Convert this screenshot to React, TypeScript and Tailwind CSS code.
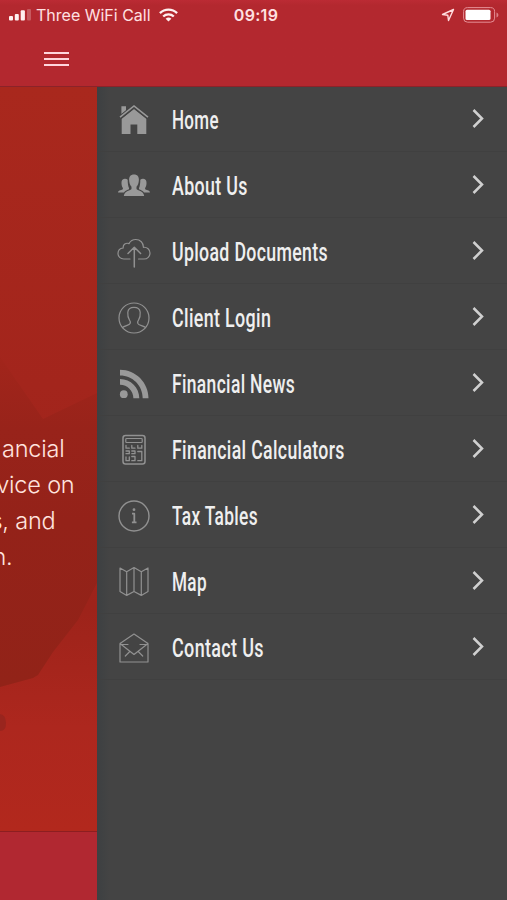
import React, { useLayoutEffect, useRef, useState } from 'react';

type IconProps = { children: React.ReactNode };

function LineIcon({ children }: IconProps) {
  return (
    <svg width="34" height="34" viewBox="0 0 34 34" fill="none" stroke="#919191" strokeWidth="1.2" strokeLinejoin="round" strokeLinecap="round">
      {children}
    </svg>
  );
}

function SolidIcon({ children }: IconProps) {
  return (
    <svg width="34" height="34" viewBox="0 0 34 34" fill="#999999">
      {children}
    </svg>
  );
}

const HomeIcon = () => (
  <SolidIcon>
    <path d="M4.4 3.3h4.600v4L4.400 11zM17 6.1l12.300 9.600V31h-9v-9.500h-6.800V31H4.700V15.700z" />
    <path d="M3 14.700 17 3.400l14 11.300" fill="none" stroke="#444444" strokeWidth="3.600" />
    <path d="M3 14.200 17 3l14 11.200" fill="none" stroke="#999999" strokeWidth="1.600" />
  </SolidIcon>
);

const PeopleIcon = () => (
  <SolidIcon>
    <path d="M17 5.500c-3.400 0-5 2.200-4.900 5.300.1 3.100 1 5.600 2.400 6.900v2.300c-.7 1.700-7 1.600-7.700 7h20.400c-.7-5.400-7-5.300-7.700-7v-2.300c1.400-1.300 2.300-3.800 2.400-6.900.1-3.100-1.500-5.300-4.900-5.300z" />
    <path d="M10.700 10.800c-.8-.9-1.800-1.200-3-1.100-2.600.2-3.400 2.200-3.200 4.700.1 2 .7 3.700 1.400 4.500v1.200c-.8 1.500-4.500.9-4.900 3.300h6c1.200-1.700 3.400-2.300 5-3.100v-1.300c-.9-1.700-1.300-4.500-1.300-8.200z" />
    <path d="M23.300 10.800c.8-.9 1.800-1.200 3-1.100 2.600.2 3.400 2.200 3.200 4.700-.1 2-.7 3.700-1.400 4.500v1.200c.8 1.500 4.500.9 4.900 3.300h-6c-1.200-1.700-3.400-2.300-5-3.100v-1.300c.9-1.700 1.300-4.500 1.300-8.200z" />
  </SolidIcon>
);

const UploadIcon = () => (
  <LineIcon>
    <path d="M13 24H6.800C3.400 24 1 21.600 1 18.500s2.200-5.200 5.200-5.500C5.700 9.600 9 7.400 12 8.600 13.500 5.700 16 4.500 18.800 4.500c4.500 0 7.700 3.400 7.600 7.800 3.800-.4 6.600 2.300 6.600 5.800 0 3.400-2.700 5.900-6 5.900h-5.500" />
    <path d="M17.300 32V13M11 18.500l6.300-6.300 6.300 6.300" strokeWidth="1.500" />
  </LineIcon>
);

const UserIcon = () => (
  <LineIcon>
    <circle cx="17" cy="17" r="15" />
    <path d="M5.500 26.500c2-1.800 6.900-2.200 7.600-3.900.4-1 .1-2.600-.7-3.700-1.600-2.300-1.800-4.900-1.600-7.600.3-3.300 2.300-5 6.200-5s5.900 1.700 6.200 5c.2 2.700 0 5.300-1.600 7.600-.8 1.100-1.100 2.700-.7 3.700.7 1.700 5.600 2.100 7.600 3.900" />
  </LineIcon>
);

const RssIcon = () => (
  <SolidIcon>
    <circle cx="6.800" cy="27.200" r="3.900" />
    <path d="M3 11.900c10.800 0 19.300 8.600 19.300 19.300h-5.900c0-7.400-6-13.400-13.400-13.400z" />
    <path d="M3 2.700c15.700 0 28.500 12.800 28.500 28.500h-5.800C25.700 18.600 15.600 8.500 3 8.500z" />
  </SolidIcon>
);

const CalculatorIcon = () => (
  <LineIcon>
    <rect x="6" y="2.500" width="22" height="28.500" rx="2.500" strokeWidth="1.500" />
    <rect x="8.800" y="5.500" width="16.400" height="4" rx=".8" />
    <path d="M9 12.500v2.700h3.300M14.800 12.500v2.700H18M20.800 12.500v2.700h4v-2.700M9 20.700h3.300V18H9M14.800 20.700H18V18h-3.200M9 24v3.700h3.300V24M14.800 27.700H18V23.500h-3.200M20.800 18.500h4v9.200h-4" strokeWidth="1.300" />
  </LineIcon>
);

const InfoIcon = () => (
  <LineIcon>
    <circle cx="17" cy="17" r="15" strokeWidth="1.400" />
    <circle cx="17" cy="10.700" r="1.400" fill="#919191" stroke="none" />
    <path d="M15 14.700h2.300V23M14.900 23.400h4.600" strokeWidth="1.800" strokeLinecap="butt" />
  </LineIcon>
);

const MapIcon = () => (
  <LineIcon>
    <path d="M3 3l6.700 3.800L17 2.600l7.300 4.200L31 3v23.500l-6.700 3.900L17 26.500l-7.300 3.900L3 26.500zM9.700 6.800v23.600M17 2.600v23.900M24.300 6.800v23.600" />
  </LineIcon>
);

const MailIcon = () => (
  <LineIcon>
    <path d="M3 12.500V31h28V12.500M3 12.500 17 3l14 9.500M3 12.500l14 11 14-11M3 13.500h8M31 13.500h-8M8.300 25l4.500-4.500M25.700 25l-4.500-4.500" />
  </LineIcon>
);

const menuItems = [
  { label: 'Home', width: 47, icon: <HomeIcon /> },
  { label: 'About Us', width: 76, icon: <PeopleIcon /> },
  { label: 'Upload Documents', width: 156, icon: <UploadIcon /> },
  { label: 'Client Login', width: 99, icon: <UserIcon /> },
  { label: 'Financial News', width: 123, icon: <RssIcon /> },
  { label: 'Financial Calculators', width: 173, icon: <CalculatorIcon /> },
  { label: 'Tax Tables', width: 86, icon: <InfoIcon /> },
  { label: 'Map', width: 35, icon: <MapIcon /> },
  { label: 'Contact Us', width: 92, icon: <MailIcon /> },
];

// Squeezes a label horizontally so it reads as a condensed face
function CondensedLabel({ text, width }: { text: string; width: number }) {
  const ref = useRef<HTMLSpanElement>(null);
  const [scale, setScale] = useState(0.6);

  useLayoutEffect(() => {
    if (ref.current) {
      setScale(width / ref.current.offsetWidth);
    }
  }, [text, width]);

  return (
    <span
      ref={ref}
      className="origin-left whitespace-nowrap font-['Roboto',sans-serif] text-[26px] leading-8 font-medium tracking-[0.5px] text-[#efefef]"
      style={{ transform: `scaleX(${scale})` }}
    >
      {text}
    </span>
  );
}

function StatusBar() {
  return (
    <div className="flex h-[30px] items-center pr-2 pl-[9px] font-['Inter',sans-serif] text-[#ffe0e2]">
      <div className="flex flex-1 items-center whitespace-nowrap">
        <svg className="shrink-0" width="23" height="12" viewBox="0 0 23 12" fill="#fff0f0">
          <rect x="0" y="7" width="4" height="4.500" rx="1" />
          <rect x="5.800" y="5" width="4" height="6.500" rx="1" />
          <rect x="11.700" y="1.200" width="4.200" height="10.300" rx="1" />
          <rect x="18" y="0" width="4" height="11.500" rx="1" opacity=".25" />
        </svg>
        <span className="ml-1 text-[16px]">Three WiFi Call</span>
        <svg className="ml-2 shrink-0" width="19" height="14" viewBox="0 0 19 14" fill="none" stroke="#fff0f0" strokeWidth="2.300">
          <path d="M.9 5.100a12.400 12.400 0 0 1 17.200 0M4.200 8.500a7.600 7.600 0 0 1 10.600 0" />
          <path d="M9.500 13.500 6.600 10.700a4.300 4.300 0 0 1 5.800 0z" fill="#fff0f0" stroke="none" />
        </svg>
      </div>
      <div className="pl-1 text-[16px] font-semibold tracking-[0.3px]">09:19</div>
      <div className="flex flex-1 items-center justify-end gap-2">
        <svg width="14" height="14" viewBox="0 0 14 14" fill="none" stroke="#ffdcde" strokeWidth="1.400" strokeLinejoin="round">
          <path d="M12.500 1.500 1.500 6.500l5.300.7.700 5.300z" />
        </svg>
        <svg width="36" height="16" viewBox="0 0 36 16">
          <rect x=".6" y=".6" width="31" height="14.600" rx="4" fill="none" stroke="#e58f96" strokeWidth="1" />
          <rect x="2.500" y="2.700" width="25" height="10.400" rx="1.500" fill="#fff" />
          <path d="M33.500 5.500c2.500 1 2.500 4 0 5z" fill="#dc8087" />
        </svg>
      </div>
    </div>
  );
}

function Backdrop() {
  return (
    <svg className="absolute inset-0" width="97" height="744" viewBox="0 0 97 744" preserveAspectRatio="none">
      <defs>
        <linearGradient id="base" x1="0" y1="0" x2="0" y2="1">
          <stop offset="0" stopColor="#a9281d" />
          <stop offset=".4" stopColor="#a3251c" />
          <stop offset=".7" stopColor="#9d231a" />
          <stop offset=".86" stopColor="#ad271e" />
          <stop offset="1" stopColor="#b2281d" />
        </linearGradient>
        <linearGradient id="shade" gradientUnits="userSpaceOnUse" x1="0" y1="270" x2="0" y2="600">
          <stop offset="0" stopColor="#a2251b" />
          <stop offset=".22" stopColor="#98231a" />
          <stop offset=".5" stopColor="#942219" />
          <stop offset="1" stopColor="#922318" />
        </linearGradient>
      </defs>
      <path d="M0 0h97v744H0z" fill="url(#base)" />
      <path d="M0 270 43 332 97 306v190L78 533 53 565 38 588l-5 3-33 9z" fill="url(#shade)" />
      <path d="M0 627q6 1 6 9t-6 8z" fill="#99251e" />
    </svg>
  );
}

export default function App() {
  return (
    <div className="flex h-[900px] w-[507px] flex-col overflow-hidden bg-[#b3282f]">
      <header className="h-[87px] shrink-0 border-b border-[#8b2329] bg-linear-to-b from-[#bb2b34] to-[#b3282f] to-6%">
        <StatusBar />
        <button className="ml-11 mt-[21.5px] flex w-[25px] flex-col gap-1" aria-label="Menu">
          <span className="h-[2px] w-full bg-[#ffd5dc]" />
          <span className="h-[2px] w-full bg-[#ffd5dc]" />
          <span className="h-[2px] w-full bg-[#ffd5dc]" />
        </button>
      </header>

      <div className="flex min-h-0 flex-1">
        <main className="flex w-[96.5px] shrink-0 flex-col overflow-hidden">
          <section className="relative h-[745px] shrink-0 border-b border-[#8d1e20]">
            <Backdrop />
            <div className="relative flex flex-col items-end pt-[343.500px] font-['Inter',sans-serif] text-[23.500px] leading-[36.300px] font-light tracking-[-0.2px] whitespace-nowrap text-[#ffe3df]">
              <p className="pr-[32px]">ancial</p>
              <p className="pr-[22px]">vice on</p>
              <p className="pr-[41px]">s, and</p>
              <p className="pr-[84px]">n.</p>
            </div>
          </section>
          <footer className="flex-1 bg-[#b12831]" />
        </main>

        <nav className="flex-1 bg-linear-to-r from-[#3d4042] to-[#444444] to-3%">
          {menuItems.map((item) => (
            <a key={item.label} className="flex h-[66px] items-center border-b border-[#404040] pr-[22px] pl-[20.500px] first:h-[65px]">
              <span className="w-[34px] pt-0.5">{item.icon}</span>
              <span className="ml-[21px] flex flex-1 pt-0.5">
                <CondensedLabel text={item.label} width={item.width} />
              </span>
              <svg width="13" height="20" viewBox="0 0 13 20" fill="none" stroke="#d0d0d0" strokeWidth="2.500">
                <path d="M1.500 1l8.500 8.500L1.500 18" />
              </svg>
            </a>
          ))}
        </nav>
      </div>
    </div>
  );
}
